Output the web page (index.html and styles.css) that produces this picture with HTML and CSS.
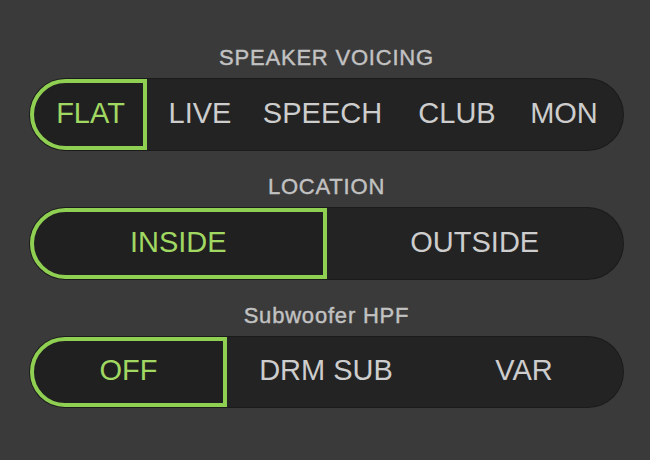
FILE: index.html
```html
<!DOCTYPE html>
<html lang="en">
<head>
<meta charset="utf-8">
<title>Speaker settings</title>
<link rel="stylesheet" href="styles.css">
</head>
<body>
<main class="panel">
  <section class="group">
    <h2 class="label">SPEAKER VOICING</h2>
    <div class="track track-voicing">
      <div class="seg selected">FLAT</div>
      <div class="seg">LIVE</div>
      <div class="seg">SPEECH</div>
      <div class="seg">CLUB</div>
      <div class="seg">MON</div>
    </div>
  </section>
  <section class="group">
    <h2 class="label">LOCATION</h2>
    <div class="track track-two">
      <div class="seg selected">INSIDE</div>
      <div class="seg">OUTSIDE</div>
    </div>
  </section>
  <section class="group">
    <h2 class="label">Subwoofer HPF</h2>
    <div class="track track-three">
      <div class="seg selected">OFF</div>
      <div class="seg">DRM SUB</div>
      <div class="seg">VAR</div>
    </div>
  </section>
</main>
</body>
</html>
```
FILE: styles.css
```css
html, body {
  margin: 0;
  padding: 0;
}
body {
  width: 650px;
  height: 460px;
  background: #3a3a3a;
  font-family: "Liberation Sans", Arial, sans-serif;
  overflow: hidden;
}
.panel {
  display: flex;
  flex-direction: column;
  gap: 24px;
  padding: 45px 27px 0 30px;
}
.group {
  display: flex;
  flex-direction: column;
  gap: 9px;
}
.label {
  margin: 0;
  text-align: center;
  font-size: 22px;
  line-height: 25px;
  font-weight: normal;
  letter-spacing: 0.8px;
  color: #c2c2c2;
  -webkit-text-stroke: 0.4px #c2c2c2;
}
.track {
  display: grid;
  height: 71px;
  background: #232323;
  border-radius: 36px;
  box-shadow: 0 0 0 1px #1b1b1b;
}
.track-voicing {
  grid-template-columns: 117px 106px 139px 130px 1fr;
}
.track-voicing .seg:last-child {
  padding-right: 17px;
}
.track-two {
  grid-template-columns: 1fr 1fr;
}
.track-three {
  grid-template-columns: 197px 1fr 1fr;
  height: 70px;
}
.seg {
  display: flex;
  align-items: center;
  justify-content: center;
  padding-bottom: 3px;
  box-sizing: border-box;
  font-size: 29px;
  color: #cdcdcd;
}
.seg.selected {
  border: 4px solid #8fcf52;
  border-radius: 36px 0 0 36px;
  background: #202020;
  color: #a0d862;
  padding-bottom: 3px;
}
.track-voicing .seg.selected {
  padding-left: 4px;
}
```
